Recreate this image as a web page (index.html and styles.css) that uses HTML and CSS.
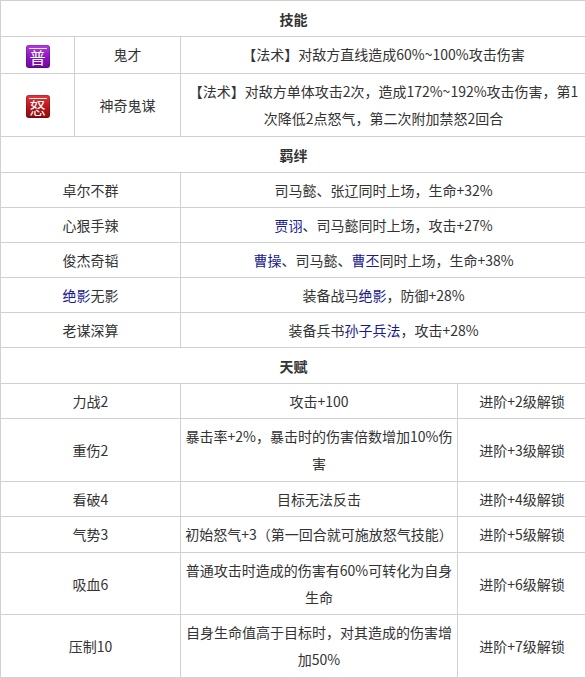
FILE: index.html
```html
<!DOCTYPE html>
<html lang="zh-CN">
<head>
<meta charset="utf-8">
<title>技能 羁绊 天赋</title>
<link rel="stylesheet" href="styles.css">
</head>
<body>
<table class="info">
  <colgroup>
    <col class="c1"><col class="c2"><col class="c3"><col class="c4">
  </colgroup>
  <tbody>
    <tr class="head"><td colspan="4">技能</td></tr>
    <tr class="r37">
      <td><span class="badge purple">普</span></td>
      <td>鬼才</td>
      <td colspan="2">【法术】对敌方直线造成60%~100%攻击伤害</td>
    </tr>
    <tr class="r63">
      <td><span class="badge red">怒</span></td>
      <td>神奇鬼谋</td>
      <td colspan="2">【法术】对敌方单体攻击2次，造成172%~192%攻击伤害，第1<br>次降低2点怒气，第二次附加禁怒2回合</td>
    </tr>

    <tr class="head"><td colspan="4">羁绊</td></tr>
    <tr><td colspan="2">卓尔不群</td><td colspan="2">司马懿、张辽同时上场，生命+32%</td></tr>
    <tr><td colspan="2">心狠手辣</td><td colspan="2"><a class="lk">贾诩</a>、司马懿同时上场，攻击+27%</td></tr>
    <tr><td colspan="2">俊杰奇韬</td><td colspan="2"><a class="lk">曹操</a>、司马懿、<a class="lk">曹丕</a>同时上场，生命+38%</td></tr>
    <tr><td colspan="2"><a class="lk">绝影</a>无影</td><td colspan="2">装备战马<a class="lk">绝影</a>，防御+28%</td></tr>
    <tr><td colspan="2">老谋深算</td><td colspan="2">装备兵书<a class="lk">孙子兵法</a>，攻击+28%</td></tr>

    <tr class="head"><td colspan="4">天赋</td></tr>
    <tr><td colspan="2">力战2</td><td>攻击+100</td><td>进阶+2级解锁</td></tr>
    <tr class="r63"><td colspan="2">重伤2</td><td>暴击率+2%，暴击时的伤害倍数增加10%伤<br>害</td><td>进阶+3级解锁</td></tr>
    <tr><td colspan="2">看破4</td><td>目标无法反击</td><td>进阶+4级解锁</td></tr>
    <tr class="r36"><td colspan="2">气势3</td><td>初始怒气+3（第一回合就可施放怒气技能）</td><td>进阶+5级解锁</td></tr>
    <tr><td colspan="2">吸血6</td><td>普通攻击时造成的伤害有60%可转化为自身<br>生命</td><td>进阶+6级解锁</td></tr>
    <tr class="r63"><td colspan="2">压制10</td><td>自身生命值高于目标时，对其造成的伤害增<br>加50%</td><td>进阶+7级解锁</td></tr>
  </tbody>
</table>
</body>
</html>
```

FILE: styles.css
```css
html, body {
  margin: 0;
  padding: 0;
  background: #ffffff;
}

.info {
  border-collapse: collapse;
  table-layout: fixed;
  width: 586px;
  font-family: "Noto Sans CJK SC", "Microsoft YaHei", sans-serif;
  font-size: 14px;
  color: #333333;
}

.c1 { width: 74px; }
.c2 { width: 106px; }
.c3 { width: 277px; }
.c4 { width: 129px; }

.info td {
  border: 1px solid #d0d0d0;
  text-align: center;
  vertical-align: middle;
  padding: 4px 3px 3px;
  line-height: 27px;
  white-space: nowrap;
}

.info tr.head td {
  font-weight: bold;
  line-height: 28px;
}

.info tr.r37 td { padding-bottom: 5px; }
.info tr.r36 td { padding-bottom: 4px; }
.info tr.r63 td { padding-bottom: 4px; }

.lk {
  color: #1a1a90;
  text-decoration: none;
}

.badge {
  position: relative;
  display: inline-block;
  width: 24px;
  height: 23px;
  border-radius: 3px;
  color: #ffffff;
  font-size: 16px;
  line-height: 25px;
  text-align: center;
  vertical-align: middle;
  box-shadow: inset 0 0 0 1px rgba(0, 0, 0, 0.18);
  overflow: hidden;
}

.badge::before {
  content: "";
  position: absolute;
  left: 3px;
  right: 3px;
  top: 3px;
  height: 1px;
  background: rgba(255, 255, 255, 0.9);
}

.purple {
  background: linear-gradient(#b33ee0, #8a16bd 55%, #6f0a9c);
}

.red {
  background: linear-gradient(#e03a3a, #b8141a 55%, #8e0b0f);
}
```
